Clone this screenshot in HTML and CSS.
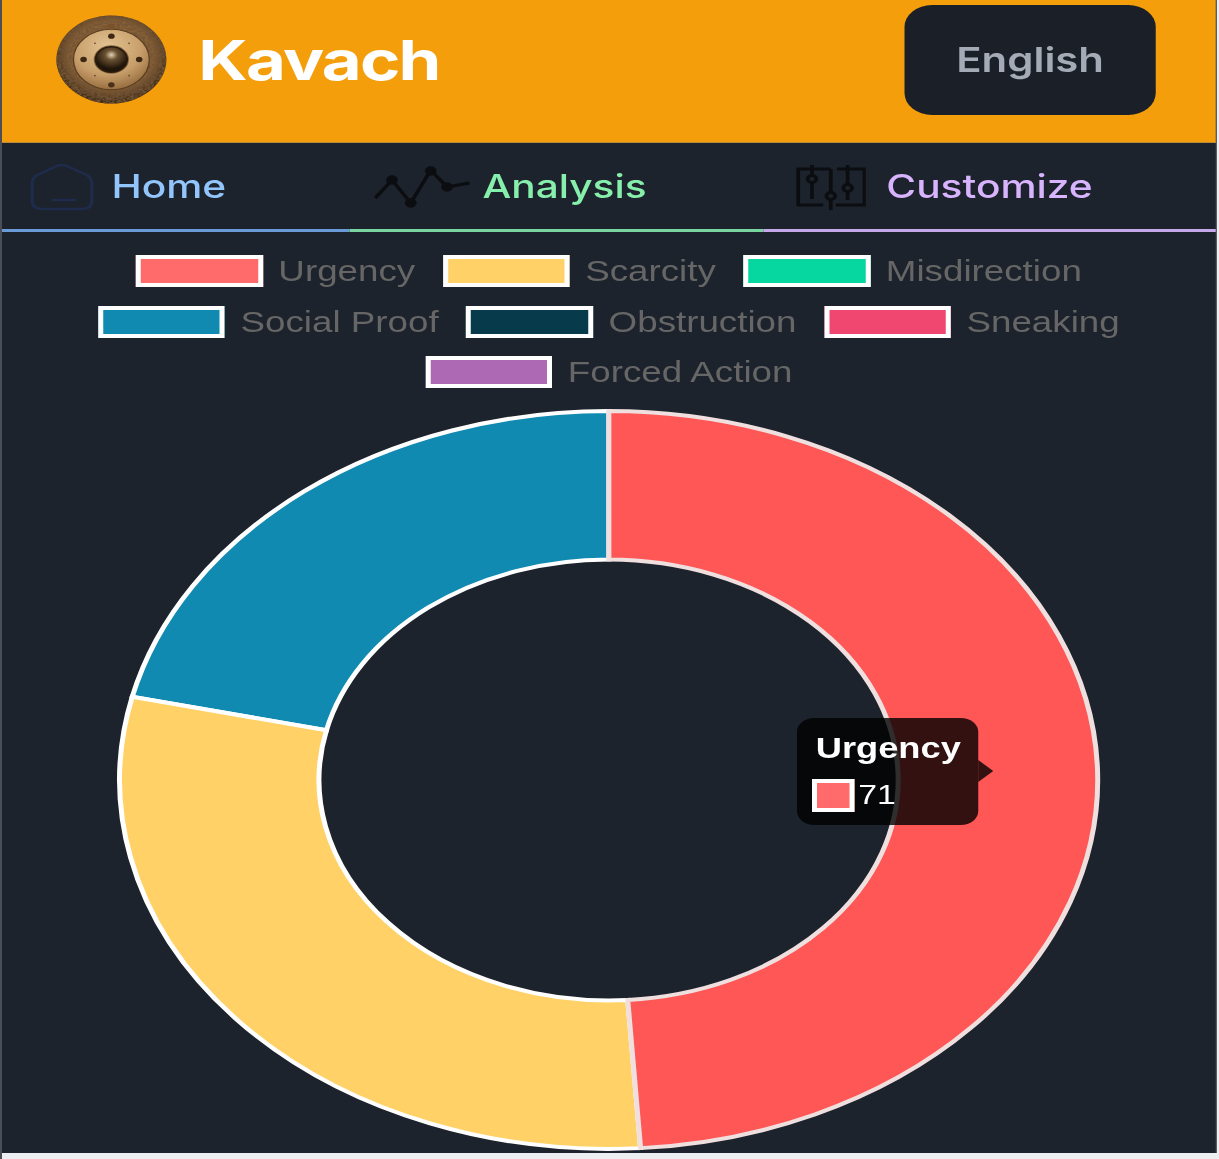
FILE: index.html
```html
<!DOCTYPE html>
<html lang="en">
<head>
    <meta charset="UTF-8">
    <meta name="viewport" content="width=device-width, initial-scale=1.0">
    <title>Kavach</title>
    <link rel="stylesheet" href="styles.css">
</head>
<body>
    <div class="app">
        <header class="header">
            <div class="brand">
                <svg class="logo" viewBox="0 0 88 88" preserveAspectRatio="none" aria-hidden="true">
                    <defs>
                        <radialGradient id="rim" cx="50%" cy="45%" r="55%">
                            <stop offset="70%" stop-color="#8a6034"/>
                            <stop offset="100%" stop-color="#35200f"/>
                        </radialGradient>
                        <radialGradient id="plate" cx="45%" cy="30%" r="75%">
                            <stop offset="0%" stop-color="#e2c493"/>
                            <stop offset="60%" stop-color="#c79e6a"/>
                            <stop offset="100%" stop-color="#8f6538"/>
                        </radialGradient>
                        <radialGradient id="boss" cx="50%" cy="32%" r="55%">
                            <stop offset="0%" stop-color="#e2d3b4"/>
                            <stop offset="35%" stop-color="#6b5232"/>
                            <stop offset="100%" stop-color="#1e1409"/>
                        </radialGradient>
                        <filter id="grain" x="0" y="0" width="100%" height="100%">
                            <feTurbulence type="fractalNoise" baseFrequency="0.45" numOctaves="2" seed="4"/>
                            <feColorMatrix values="0 0 0 0 0.16  0 0 0 0 0.09  0 0 0 0 0.04  2.2 0 0 0 -0.6"/>
                            <feComposite in2="SourceGraphic" operator="in"/>
                            <feMerge>
                                <feMergeNode in="SourceGraphic"/>
                                <feMergeNode/>
                            </feMerge>
                        </filter>
                    </defs>
                    <circle cx="44" cy="44" r="43.5" fill="url(#rim)" filter="url(#grain)"/>
                    <circle cx="44" cy="44" r="30" fill="url(#plate)" stroke="#5a3e22" stroke-width="1"/>
                    <circle cx="44" cy="44" r="13.5" fill="none" stroke="#8a6a42" stroke-width="1"/>
                    <circle cx="44" cy="44" r="12.5" fill="url(#boss)" stroke="#2a1b0c" stroke-width="1.5"/>
                    <circle cx="44" cy="12" r="3" fill="#7a5128"/>
                    <circle cx="44" cy="21" r="2.6" fill="#3c2713"/>
                    <circle cx="44" cy="69" r="2.6" fill="#4a3018"/>
                    <circle cx="22" cy="44" r="2.6" fill="#3c2713"/>
                    <circle cx="66" cy="44" r="2.6" fill="#3c2713"/>
                    <circle cx="31" cy="28" r="0.8" fill="#6d4c28"/>
                    <circle cx="58" cy="28" r="0.8" fill="#6d4c28"/>
                    <circle cx="31" cy="60" r="0.8" fill="#6d4c28"/>
                    <circle cx="58" cy="60" r="0.8" fill="#6d4c28"/>
                </svg>
                <span class="brand-name">Kavach</span>
            </div>
            <button class="lang-btn">English</button>
        </header>

        <nav class="tabs">
            <a class="tab tab-home">
                <svg class="tab-icon icon-home" viewBox="0 0 50 48" preserveAspectRatio="none" aria-hidden="true">
                    <path d="M2 20 Q2 15 6 12 L21 3 Q25 1 29 3 L44 12 Q48 15 48 20 V38 Q48 46 40 46 H10 Q2 46 2 38 Z"/>
                    <path d="M17 37 H36"/>
                </svg>
                <span>Home</span>
            </a>
            <a class="tab tab-analysis">
                <svg class="tab-icon icon-pulse" viewBox="0 0 78 42" aria-hidden="true">
                    <path d="M1.6 32 L15 14 L30 37 L46 4 L59 21 L77 17"/>
                    <circle cx="15" cy="14" r="3.2"/>
                    <circle cx="30" cy="37" r="3.2"/>
                    <circle cx="46" cy="5" r="3.2"/>
                    <circle cx="59" cy="21" r="3.2"/>
                </svg>
                <span>Analysis</span>
            </a>
            <a class="tab tab-customize">
                <svg class="tab-icon icon-sliders" viewBox="0 0 56 46" preserveAspectRatio="none" aria-hidden="true">
                    <path d="M28 5 H2 V41 H22"/>
                    <path d="M33 5 H55 V41 H32"/>
                    <path d="M13 1 V11 M13 19 V35"/>
                    <path d="M28 5 V28 M28 36 V46"/>
                    <path d="M41.5 1 V20 M41.5 28 V36"/>
                    <circle cx="13" cy="15" r="3.5"/>
                    <circle cx="28" cy="32" r="3.5"/>
                    <circle cx="41.5" cy="24" r="3.5"/>
                </svg>
                <span>Customize</span>
            </a>
        </nav>

        <main class="analysis">
            <ul class="legend">
                <li class="legend-item"><i class="swatch c-urgency"></i>Urgency</li>
                <li class="legend-item"><i class="swatch c-scarcity"></i>Scarcity</li>
                <li class="legend-item"><i class="swatch c-misdirection"></i>Misdirection</li>
                <li class="legend-item"><i class="swatch c-social"></i>Social Proof</li>
                <li class="legend-item"><i class="swatch c-obstruction"></i>Obstruction</li>
                <li class="legend-item"><i class="swatch c-sneaking"></i>Sneaking</li>
                <li class="legend-item"><i class="swatch c-forced"></i>Forced Action</li>
            </ul>

            <div class="chart">
                <svg class="doughnut" viewBox="0 0 971.2 750" aria-hidden="true">
                    <path class="slice slice-social" d="M485.6 6 A391.5 369 0 0 0 104.2 291.8 L259.6 325.3 A232 220.5 0 0 1 485.6 154.5 Z"/>
                    <path class="slice slice-scarcity" d="M104.2 291.8 A391.5 369 0 0 0 511 743.2 L500.7 595 A232 220.5 0 0 1 259.6 325.3 Z"/>
                    <path class="slice slice-urgency" d="M485.6 6 A391.5 369 0 0 1 511 743.2 L500.7 595 A232 220.5 0 0 0 485.6 154.5 Z"/>
                </svg>
                <div class="tooltip">
                    <div class="tooltip-title">Urgency</div>
                    <div class="tooltip-row"><i class="tooltip-swatch"></i>71</div>
                </div>
            </div>
        </main>
    </div>
</body>
</html>
```

FILE: styles.css
```css
* {
    box-sizing: border-box;
}
html {
    overflow: hidden;
}
body {
    margin: 0;
    height: 1159px;
    overflow: hidden;
    background: #eceef1;
    border-left: 2px solid #4b4f55;
    font-family: 'Liberation Sans', Arial, sans-serif;
}
/* the whole app is stretched sideways by a quarter */
.app {
    width: 972px;
    height: 1153px;
    background: #1d232c;
    border-right: 1px solid #5c5c58;
    transform: scale(1.25, 1);
    transform-origin: 0 0;
}
.header {
    display: flex;
    align-items: center;
    justify-content: space-between;
    height: 143px;
    padding: 0 48px 23px 43px;
    background: #f59e0b;
    border-bottom: 1px solid #b98a3a;
}
.brand {
    display: flex;
    align-items: center;
    gap: 25px;
}
.logo {
    width: 89px;
    height: 89px;
}
.brand-name {
    font-family: 'Inter', sans-serif;
    font-size: 55px;
    font-weight: 700;
    letter-spacing: -1.4px;
    color: #fff;
}
.lang-btn {
    width: 201px;
    height: 110px;
    border: none;
    border-radius: 22px;
    background: #1b2028;
    color: #a5abb6;
    font-family: 'Inter', sans-serif;
    font-size: 33.5px;
    font-weight: 600;
}
.tabs {
    display: flex;
    height: 89px;
}
.tab {
    display: flex;
    align-items: center;
    justify-content: center;
    gap: 14px;
    padding-right: 77px;
    padding-top: 1px;
    font-family: 'Inter', sans-serif;
    font-size: 32.5px;
    font-weight: 500;
    border-bottom: 3px solid;
}
.tab-home {
    width: 278px;
    color: #93c5fd;
    border-color: #6a9bd8;
}
.tab-analysis {
    width: 331px;
    gap: 9px;
    padding-right: 74px;
    color: #86efac;
    border-color: #7ad6a0;
}
.tab-customize {
    width: 362px;
    gap: 16px;
    padding-right: 72px;
    color: #d8b4fe;
    border-color: #c5a9ea;
}
.tab-icon {
    fill: none;
    stroke-width: 2.5;
}
.icon-home {
    width: 52px;
    height: 48px;
    stroke: #1e2b4a;
}
.icon-pulse {
    width: 78px;
    height: 42px;
    stroke: #0b0d10;
    stroke-width: 3;
}
.icon-pulse circle {
    fill: #0b0d10;
}
.icon-sliders {
    width: 56px;
    height: 46px;
    stroke: #0b0d10;
    stroke-width: 3;
}
.legend {
    display: flex;
    flex-wrap: wrap;
    justify-content: center;
    gap: 18.5px 22px;
    margin: 0;
    padding: 23px 50px 0;
    list-style: none;
}
.legend-item {
    display: flex;
    align-items: center;
    gap: 12.5px;
    height: 32px;
    font-size: 29.4px;
    color: #666;
    white-space: nowrap;
}
.swatch {
    width: 101.5px;
    height: 32px;
    border: 4.5px solid #fff;
}
.c-urgency { background: #ff6b6b; }
.c-scarcity { background: #ffd166; }
.c-misdirection { background: #06d6a0; }
.c-social { background: #118ab2; }
.c-obstruction { background: #073b4c; }
.c-sneaking { background: #ef476f; }
.c-forced { background: #ad69b3; }
.chart {
    position: relative;
    margin-top: 17px;
}
.doughnut {
    display: block;
    width: 971px;
    height: 750px;
}
.slice {
    stroke: #fff;
    stroke-width: 4;
}
.slice-social { fill: #118ab2; }
.slice-scarcity { fill: #ffd166; }
.slice-urgency {
    fill: #ff5656;
    stroke: #f0dfdf;
}
.tooltip {
    position: absolute;
    left: 636px;
    top: 313px;
    width: 145px;
    height: 107px;
    padding: 15.5px 0 0 15px;
    background: rgba(0, 0, 0, 0.8);
    border-radius: 14px;
    color: #fff;
    font-size: 29px;
    line-height: 1;
}
.tooltip::after {
    content: "";
    position: absolute;
    right: -12px;
    top: 42px;
    border: solid transparent;
    border-width: 11px 0 11px 12px;
    border-left-color: rgba(0, 0, 0, 0.8);
}
.tooltip-title {
    font-weight: 700;
}
.tooltip-row {
    display: flex;
    align-items: center;
    gap: 3px;
    margin-top: 16px;
    margin-left: -3px;
    font-size: 27px;
}
.tooltip-swatch {
    width: 34px;
    height: 33px;
    border: 4.5px solid #fff;
    background: #ff6b6b;
}
```
